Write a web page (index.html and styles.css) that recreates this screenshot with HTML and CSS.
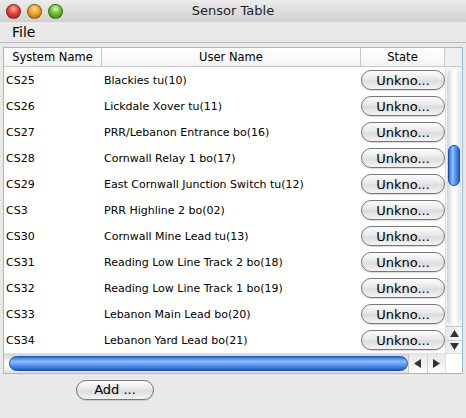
FILE: index.html
```html
<!DOCTYPE html>
<html>
<head>
<meta charset="utf-8">
<link rel="stylesheet" href="styles.css">
</head>
<body>
<div class="window">
  <div class="titlebar">
    <div class="lights">
      <span class="light red"></span>
      <span class="light orange"></span>
      <span class="light green"></span>
    </div>
    <div class="title">Sensor Table</div>
  </div>
  <div class="menubar"><span class="menu">File</span></div>
  <div class="frame">
    <div class="header">
      <div class="hcell c1">System Name</div>
      <div class="hcell c2">User Name</div>
      <div class="hcell c3">State</div>
      <div class="hcell c4"></div>
    </div>
    <div class="body">
      <div class="rows">
        <div class="row"><div class="cell c1">CS25</div><div class="cell c2">Blackies tu(10)</div><div class="cell c3"><span class="btn">Unkno...</span></div></div>
        <div class="row"><div class="cell c1">CS26</div><div class="cell c2">Lickdale Xover tu(11)</div><div class="cell c3"><span class="btn">Unkno...</span></div></div>
        <div class="row"><div class="cell c1">CS27</div><div class="cell c2">PRR/Lebanon Entrance bo(16)</div><div class="cell c3"><span class="btn">Unkno...</span></div></div>
        <div class="row"><div class="cell c1">CS28</div><div class="cell c2">Cornwall Relay 1 bo(17)</div><div class="cell c3"><span class="btn">Unkno...</span></div></div>
        <div class="row"><div class="cell c1">CS29</div><div class="cell c2">East Cornwall Junction Switch tu(12)</div><div class="cell c3"><span class="btn">Unkno...</span></div></div>
        <div class="row"><div class="cell c1">CS3</div><div class="cell c2">PRR Highline 2 bo(02)</div><div class="cell c3"><span class="btn">Unkno...</span></div></div>
        <div class="row"><div class="cell c1">CS30</div><div class="cell c2">Cornwall Mine Lead tu(13)</div><div class="cell c3"><span class="btn">Unkno...</span></div></div>
        <div class="row"><div class="cell c1">CS31</div><div class="cell c2">Reading Low Line Track 2 bo(18)</div><div class="cell c3"><span class="btn">Unkno...</span></div></div>
        <div class="row"><div class="cell c1">CS32</div><div class="cell c2">Reading Low Line Track 1 bo(19)</div><div class="cell c3"><span class="btn">Unkno...</span></div></div>
        <div class="row"><div class="cell c1">CS33</div><div class="cell c2">Lebanon Main Lead bo(20)</div><div class="cell c3"><span class="btn">Unkno...</span></div></div>
        <div class="row"><div class="cell c1">CS34</div><div class="cell c2">Lebanon Yard Lead bo(21)</div><div class="cell c3"><span class="btn">Unkno...</span></div></div>
      </div>
      <div class="vscroll">
        <div class="vtrack">
          <div class="vthumb"></div>
        </div>
        <div class="varrows">
          <div class="varrow"><svg width="9" height="7" viewBox="0 0 9 7"><polygon points="4.5,0 9,7 0,7" fill="#333"/></svg></div>
          <div class="varrow"><svg width="9" height="7" viewBox="0 0 9 7"><polygon points="0,0 9,0 4.5,7" fill="#333"/></svg></div>
        </div>
      </div>
    </div>
    <div class="hbar">
      <div class="htrack"><div class="hthumb"></div></div>
      <div class="harrows">
        <div class="harrow"><svg width="7" height="9" viewBox="0 0 7 9"><polygon points="0,4.5 7,0 7,9" fill="#333"/></svg></div>
        <div class="harrow"><svg width="7" height="9" viewBox="0 0 7 9"><polygon points="0,0 7,4.5 0,9" fill="#333"/></svg></div>
      </div>
      <div class="corner"></div>
    </div>
  </div>
  <div class="footer">
    <span class="addbtn">Add ...</span>
  </div>
</div>
</body>
</html>
```
FILE: styles.css
```css
* { box-sizing: border-box; }
html, body { margin: 0; padding: 0; }
body {
  width: 466px;
  height: 418px;
  overflow: hidden;
  font-family: "DejaVu Sans", "Liberation Sans", sans-serif;
  color: #000;
}
.window {
  width: 466px;
  height: 418px;
  background: repeating-linear-gradient(0deg, #ececec 0px, #ececec 1px, #e6e6e6 1px, #e6e6e6 2px);
  display: flex;
  flex-direction: column;
}
.titlebar {
  height: 22px;
  display: flex;
  align-items: center;
  position: relative;
  background: linear-gradient(#ececec, #d0d0d0);
}
.lights {
  display: flex;
  gap: 6px;
  padding-left: 6px;
}
.light {
  width: 15px;
  height: 15px;
  border-radius: 50%;
  border: 1px solid rgba(0,0,0,0.35);
}
.red { background: radial-gradient(circle at 50% 30%, #ffb0a8 0%, #e2443a 45%, #a81c12 100%); }
.orange { background: radial-gradient(circle at 50% 30%, #ffe0a0 0%, #f0a020 45%, #b06008 100%); }
.green { background: radial-gradient(circle at 50% 30%, #d8ffb0 0%, #70c030 45%, #2f7a0c 100%); }
.title {
  position: absolute;
  left: 0; right: 0; top: 3px;
  text-align: center;
  font-size: 13px;
  color: #222;
}
.menubar {
  height: 21px;
  border-bottom: 1px solid #b8b8b8;
  display: flex;
  align-items: center;
  padding-left: 12px;
  font-size: 14px;
}
.frame {
  margin: 4px 3px 0 3px;
  height: 327px;
  border: 1px solid #9fb8d4;
  background: #fff;
  display: flex;
  flex-direction: column;
}
.header {
  height: 19px;
  display: flex;
  font-size: 11.5px;
  background: linear-gradient(#ffffff, #f4f4f4);
  border-bottom: 1px solid #c8c8c8;
}
.hcell {
  text-align: center;
  line-height: 18px;
  border-right: 1px solid #c8c8c8;
}
.hcell.c4 { border-right: none; flex: 1; background: #efefef; }
.c1 { width: 98px; }
.c2 { width: 259px; }
.c3 { width: 84px; }
.body {
  height: 286px;
  display: flex;
}
.rows {
  width: 441px;
  display: flex;
  flex-direction: column;
}
.row {
  height: 26px;
  display: flex;
  align-items: center;
  font-size: 11px;
}
.cell.c1 { padding-left: 2px; }
.cell.c2 { padding-left: 2px; }
.cell.c3 { display: flex; justify-content: center; padding-left: 0; }
.btn, .addbtn {
  display: inline-flex;
  align-items: center;
  justify-content: center;
  height: 20px;
  border: 1px solid #777;
  border-radius: 10px;
  background: linear-gradient(#fdfdfd 0%, #e8e8e8 45%, #dcdcdc 55%, #f4f4f4 100%);
  box-shadow: 0 1px 1px rgba(0,0,0,0.15);
  font-size: 13px;
}
.btn { width: 84px; }
.vscroll {
  width: 17px;
  display: flex;
  flex-direction: column;
  background: #f2f2f2;
  border-left: 1px solid #e0e0e0;
}
.vtrack {
  flex: 1;
  position: relative;
  background: linear-gradient(90deg, #d4d4d4, #f8f8f8 40%, #ffffff 60%, #e0e0e0);
  border-radius: 8px;
  margin: 2px 1px 0 1px;
}
.vthumb {
  position: absolute;
  left: 1px; right: 1px;
  top: 76px;
  height: 41px;
  border-radius: 7px;
  border: 1px solid #1c4fae;
  background: linear-gradient(90deg, #2d6fd8 0%, #8cc0ff 35%, #5c9cf0 60%, #1e5cc8 100%);
}
.varrows {
  height: 27px;
  display: flex;
  flex-direction: column;
  border-top: 1px solid #c8c8c8;
}
.varrow {
  flex: 1;
  display: flex;
  align-items: center;
  justify-content: center;
  background: linear-gradient(90deg, #e8e8e8, #fbfbfb);
}
.varrow + .varrow { border-top: 1px solid #d0d0d0; }
.hbar {
  height: 20px;
  display: flex;
  border-top: 1px solid #e0e0e0;
  background: #f2f2f2;
}
.htrack {
  width: 404px;
  padding: 2px 0 1px 5px;
  background: linear-gradient(#d4d4d4, #f8f8f8 40%, #ffffff 60%, #e0e0e0);
}
.hthumb {
  height: 15px;
  border-radius: 8px;
  border: 1px solid #1c4fae;
  background: linear-gradient(#2d6fd8 0%, #8cc0ff 35%, #5c9cf0 60%, #1e5cc8 100%);
}
.harrows {
  width: 37px;
  display: flex;
  border-left: 1px solid #c8c8c8;
}
.harrow {
  flex: 1;
  display: flex;
  align-items: center;
  justify-content: center;
  background: linear-gradient(#e8e8e8, #fbfbfb);
}
.harrow + .harrow { border-left: 1px solid #d0d0d0; }
.corner { flex: 1; background: #fff; border-left: 1px solid #e0e0e0; }
.footer {
  padding: 5px 0 0 76px;
}
.addbtn { width: 78px; }
```
